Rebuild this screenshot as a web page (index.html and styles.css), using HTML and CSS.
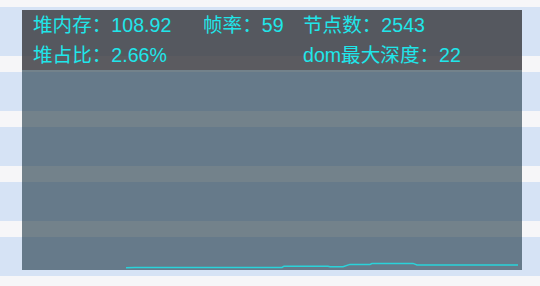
FILE: index.html
```html
<!DOCTYPE html>
<html lang="zh">
<head>
<meta charset="utf-8">
<link rel="stylesheet" href="styles.css">
</head>
<body>
<div class="rows">
  <div class="row row-first"></div>
  <div class="row"></div>
  <div class="row"></div>
  <div class="row"></div>
  <div class="row"></div>
</div>
<div class="monitor">
  <div class="info">
    <div class="stat">堆内存：108.92</div>
    <div class="stat">帧率：59</div>
    <div class="stat">节点数：2543</div>
    <div class="stat">堆占比：2.66%</div>
    <div class="stat stat-far">dom最大深度：22</div>
  </div>
  <div class="chart">
    <svg class="chart-svg" width="500" height="200" viewBox="0 0 500 200">
      <polyline class="line" points="104,197.8 113,197.6 260,197.4 262,196.2 306,196.2 308,196.7 321,196.8 328,194.4 348,194.4 350,193.5 391,193.4 395,195 496,195"/>
    </svg>
  </div>
</div>
</body>
</html>
```
FILE: styles.css
```css
html, body {
  margin: 0;
  padding: 0;
}
body {
  width: 540px;
  height: 286px;
  overflow: hidden;
  background: #f6f6f8;
  position: relative;
  font-family: "Liberation Sans", "Noto Sans CJK SC", sans-serif;
}
.rows {
  display: flex;
  flex-direction: column;
  gap: 16px;
  padding-top: 7px;
}
.row {
  height: 39px;
  background: #d6e3f5;
}
.row-first {
  height: 49px;
}
.monitor {
  position: absolute;
  left: 22px;
  top: 10px;
  width: 500px;
  height: 260px;
  display: flex;
  flex-direction: column;
}
.info {
  height: 60px;
  box-sizing: border-box;
  padding: 0 0 0 11px;
  background: rgba(52, 53, 57, 0.8);
  display: grid;
  grid-template-columns: 170px 100px 1fr;
  grid-auto-rows: 30px;
  align-items: center;
  color: #1fe6ea;
  font-size: 19.6px;
  line-height: 30px;
  white-space: nowrap;
}
.stat-far {
  grid-column: 3;
}
.chart {
  flex: 1;
  background: rgba(34, 58, 72, 0.62);
}
.chart-svg {
  display: block;
}
.line {
  fill: none;
  stroke: #2ad3da;
  stroke-width: 1.5;
}
```
